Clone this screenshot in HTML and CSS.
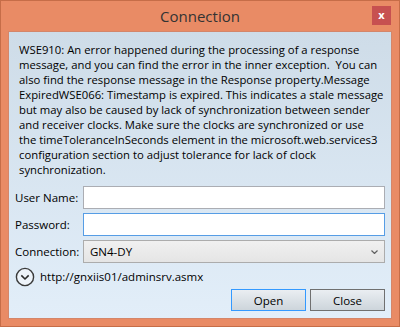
FILE: index.html
```html
<!DOCTYPE html>
<html>
<head>
<meta charset="utf-8">
<title>Connection</title>
<link rel="stylesheet" href="styles.css">
</head>
<body>
<div class="window">
  <div class="titlebar">
    <div class="title">Connection</div>
    <div class="close-x">x</div>
  </div>
  <div class="client">
    <div class="message">
      <span class="line">WSE910: An error happened during the processing of a response</span>
      <span class="line">message, and you can find the error in the inner exception.&nbsp; You can</span>
      <span class="line">also find the response message in the Response property.Message</span>
      <span class="line">ExpiredWSE066: Timestamp is expired. This indicates a stale message</span>
      <span class="line">but may also be caused by lack of synchronization between sender</span>
      <span class="line">and receiver clocks. Make sure the clocks are synchronized or use</span>
      <span class="line">the timeToleranceInSeconds element in the microsoft.web.services3</span>
      <span class="line">configuration section to adjust tolerance for lack of clock</span>
      <span class="line">synchronization.</span>
    </div>
    <div class="form">
      <label class="label">User Name:</label>
      <div class="input"></div>
      <label class="label">Password:</label>
      <div class="input focused"></div>
      <label class="label">Connection:</label>
      <div class="combo">
        <span>GN4-DY</span>
        <svg class="combo-arrow" width="7" height="4" viewBox="0 0 7 4"><path d="M0.5 0.5 L3.5 3.5 L6.5 0.5" fill="none" stroke="#606060" stroke-width="1.2"/></svg>
      </div>
    </div>
    <div class="expander">
      <svg width="20" height="20" viewBox="0 0 20 20"><circle cx="10" cy="10" r="8.6" fill="#eef4fa" stroke="#3a3a3a" stroke-width="1.4"/><path d="M6.3 8.4 L10 12 L13.7 8.4" fill="none" stroke="#2a2a2a" stroke-width="1.6"/></svg>
      <span class="url">http://gnxiis01/adminsrv.asmx</span>
    </div>
    <div class="buttons">
      <div class="btn default">Open</div>
      <div class="btn">Close</div>
    </div>
  </div>
</div>
</body>
</html>
```

FILE: styles.css
```css
* { box-sizing: border-box; }
html, body { margin: 0; padding: 0; }
body {
  font-family: "Open Sans", "Noto Sans", sans-serif;
  font-size: 11.3px;
  color: #000;
}
.window {
  width: 400px;
  height: 327px;
  background: #e98b65;
  border: 1px solid #c66d48;
  display: flex;
  flex-direction: column;
}
.titlebar {
  height: 30px;
  display: flex;
  align-items: center;
  justify-content: center;
  position: relative;
}
.title {
  font-size: 15px;
  color: #333;
}
.close-x {
  position: absolute;
  right: 8px;
  top: 5px;
  width: 19px;
  height: 19px;
  background: #c75050;
  color: #fff;
  font-weight: bold;
  font-size: 11px;
  display: flex;
  align-items: center;
  justify-content: center;
  line-height: 1;
  padding-bottom: 2px;
}
.client {
  margin: 0 7px 7px 7px;
  height: 288px;
  border: 1px solid #d4866a;
  background: linear-gradient(#cedce8, #e2eef9);
  padding: 10px 6px 0 6px;
}
.message {
  padding-left: 4px;
  line-height: 15px;
}
.line {
  display: block;
  white-space: nowrap;
}
.form {
  margin-top: 9px;
  display: grid;
  grid-template-columns: 68px 302px;
  row-gap: 4px;
  align-items: center;
}
.label { font-size: 11.5px; }
.input {
  height: 23px;
  background: #fff;
  border: 1px solid #abadb3;
}
.input.focused { border-color: #569de5; }
.combo {
  height: 23px;
  border: 1px solid #acacac;
  background: linear-gradient(#f0f0f0, #e5e5e5);
  display: flex;
  align-items: center;
  justify-content: space-between;
  padding: 0 6px 0 6px;
  font-size: 11.5px;
}
.expander {
  margin-top: 3px;
  display: flex;
  align-items: center;
  gap: 5px;
  height: 21px;
  font-size: 11.5px;
}
.buttons {
  margin-top: 2px;
  display: flex;
  justify-content: flex-end;
  gap: 4px;
  font-size: 11.5px;
}
.btn {
  width: 75px;
  height: 22px;
  border: 1px solid #707070;
  background: linear-gradient(#eaeef2, #cdd5db);
  display: flex;
  align-items: center;
  justify-content: center;
}
.btn.default { border-color: #3399ff; }
```
